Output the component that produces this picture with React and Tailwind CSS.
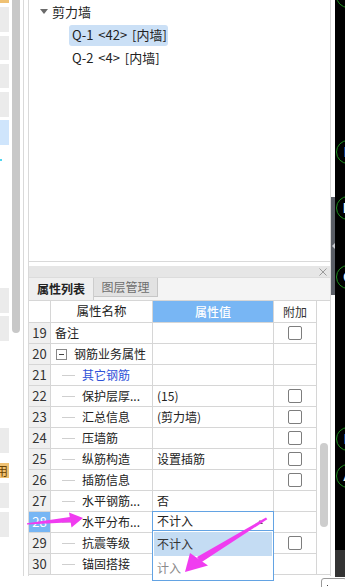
import React from "react";

const rows = [
  { n: 19, name: "备注", cb: true, kind: "plain" },
  { n: 20, name: "钢筋业务属性", kind: "group" },
  { n: 21, name: "其它钢筋", kind: "tree", blue: true },
  { n: 22, name: "保护层厚...", val: "(15)", cb: true, kind: "tree" },
  { n: 23, name: "汇总信息", val: "(剪力墙)", cb: true, kind: "tree" },
  { n: 24, name: "压墙筋", cb: true, kind: "tree" },
  { n: 25, name: "纵筋构造", val: "设置插筋", cb: true, kind: "tree" },
  { n: 26, name: "插筋信息", cb: true, kind: "tree" },
  { n: 27, name: "水平钢筋...", val: "否", kind: "tree" },
  { n: 28, name: "水平分布...", kind: "tree", dropdown: true, sel: true },
  { n: 29, name: "抗震等级", cb: true, kind: "tree" },
  { n: 30, name: "锚固搭接", kind: "tree" },
];

function Checkbox() {
  return <div className="w-[14px] h-[14px] border border-[#7d7d7d] rounded-[2px] bg-white" />;
}

function LeftStrip() {
  return (
    <div className="w-[24px] h-[576px] border-r border-[#d9d9d9] flex shrink-0">
      <div className="w-[9px] flex flex-col">
        <div className="h-[3px] bg-[#efc173]" />
        <div className="mt-[4px] h-[25px] bg-[#ebebeb]" />
        <div className="mt-[4px] h-[24px] bg-[#ebebeb]" />
        <div className="mt-[4px] h-[24px] bg-[#ebebeb]" />
        <div className="mt-[4px] h-[25px] bg-[#ebebeb]" />
        <div className="mt-[3px] h-[25px] bg-[#cfe5fc]" />
        <div className="mt-[14px] h-[2px] w-[2px] bg-[#4fd6f0]" />
        <div className="mt-[127px] h-[25px] bg-[#ebebeb]" />
        <div className="mt-[3px] h-[25px] bg-[#ebebeb]" />
        <div className="mt-[87px] h-[25px] bg-[#ebebeb]" />
        <div className="mt-[10px] h-[15px] bg-[#efc173] overflow-hidden flex items-center">
          <span className="ml-[-4px] text-[12px] leading-[15px] text-[#6b4200]">用</span>
        </div>
        <div className="mt-[5px] h-[25px] bg-[#ebebeb]" />
        <div className="mt-[4px] h-[25px] bg-[#ebebeb]" />
      </div>
      <div className="w-[3px]" />
      <div className="w-[8px] h-[333px] bg-[#c8c8c8] rounded-b-full" />
    </div>
  );
}

function TreePanel() {
  return (
    <div className="h-[262px] border-b border-[#d9d9d9] text-[13px] text-[#222]">
      <div className="h-[22px] mt-[1px] flex items-center">
        <svg width="8" height="6" viewBox="0 0 8 6" className="ml-[11px]">
          <polygon points="0,0 8,0 4,5" fill="#6a6a6a" />
        </svg>
        <span className="ml-[4px] leading-[22px]">剪力墙</span>
      </div>
      <div className="h-[22px] mt-[1px] flex items-center">
        <div className="ml-[40px] w-[99px] h-[21px] rounded-[3px] bg-[#cbe0f6] flex items-center pl-[3px] whitespace-pre [word-spacing:2px]">
          Q-1 &lt;42&gt; [内墙]
        </div>
      </div>
      <div className="h-[22px] mt-[1px] flex items-center">
        <div className="ml-[43px] whitespace-pre [word-spacing:2px]">Q-2 &lt;4&gt; [内墙]</div>
      </div>
    </div>
  );
}

function Row({ r }) {
  return (
    <div className="flex h-[21px] border-b border-[#d6d6d6] text-[12px] text-[#222]">
      <div
        className={
          "w-[22px] border-r border-[#d6d6d6] flex items-center justify-center text-[13px] " +
          (r.sel ? "bg-[#77b6f4] text-white" : "bg-[#f0f0f0] text-[#333]")
        }
      >
        {r.n}
      </div>
      <div className="w-[102px] border-r border-[#d6d6d6] flex items-center overflow-hidden whitespace-nowrap">
        {r.kind === "plain" && <span className="ml-[4px]">{r.name}</span>}
        {r.kind === "group" && (
          <>
            <div className="ml-[5px] w-[11px] h-[11px] border border-[#888] bg-white flex items-center justify-center">
              <div className="w-[5px] h-px bg-[#444]" />
            </div>
            <span className="ml-[7px]">{r.name}</span>
          </>
        )}
        {r.kind === "tree" && (
          <>
            <div className="ml-[11px] w-[13px] h-px bg-[#cfcfcf]" />
            <span className={"ml-[7px] " + (r.blue ? "text-[#2f52d8]" : "")}>{r.name}</span>
          </>
        )}
      </div>
      <div className="w-[121px] border-r border-[#d6d6d6] relative flex items-center">
        {r.val && <span className="ml-[4px]">{r.val}</span>}
        {r.dropdown && (
          <>
            <div className="absolute left-[-1px] top-[-1px] w-[122px] h-[20px] border border-[#63a3e3] bg-white flex items-center">
              <span className="ml-[4px]">不计入</span>
              <svg width="6" height="4" viewBox="0 0 6 4" className="ml-auto mr-[10px] mt-[1px]">
                <polygon points="0,4 6,4 3,0" fill="#555" />
              </svg>
            </div>
            <div className="absolute left-[-1px] top-[18px] w-[122px] h-[51px] border border-[#63a3e3] bg-white z-10 flex flex-col">
              <div className="h-[24px] mt-[1px] mx-px bg-[#c4dcf3] flex items-center pl-[3px] text-[#333]">不计入</div>
              <div className="h-[24px] flex items-center pl-[4px] text-[#8a8a8a]">计入</div>
            </div>
          </>
        )}
      </div>
      <div className="w-[42px] flex items-center justify-center">{r.cb && <Checkbox />}</div>
    </div>
  );
}

function BottomPanel() {
  return (
    <div className="flex flex-col">
      <div className="h-[4px]" />
      <div className="h-[11px] bg-[#e6e6e6] flex items-center justify-end pr-[3px]">
        <svg width="8" height="8" viewBox="0 0 8 8">
          <path d="M0.5 0.5 L7.5 7.5 M7.5 0.5 L0.5 7.5" stroke="#9a9a9a" strokeWidth="1" />
        </svg>
      </div>
      <div className="h-[23px] bg-[#f4f4f4] flex border-t border-[#dcdcdc] text-[12px]">
        <div className="w-[65px] bg-[#efefef] border-r border-[#cdcdcd] flex items-center justify-center text-[#222] font-semibold">
          属性列表
        </div>
        <div className="w-[64px] h-[19px] bg-[#e2e2e2] border-r border-b border-[#c6c6c6] flex items-center justify-center text-[#6e6e6e]">
          图层管理
        </div>
      </div>
      <div className="flex border-t border-[#d6d6d6]">
        <div className="flex flex-col">
          <div className="flex h-[22px] border-b border-[#d6d6d6] text-[12px]">
            <div className="w-[22px] border-r border-[#d6d6d6] bg-white" />
            <div className="w-[102px] border-r border-[#d6d6d6] flex items-center justify-center text-[#222] text-[12.5px]">
              属性名称
            </div>
            <div className="w-[121px] border-r border-[#d6d6d6] bg-[#78b6f4] flex items-center justify-center text-white font-medium">
              属性值
            </div>
            <div className="w-[42px] flex items-center justify-center text-[#333]">附加</div>
          </div>
          {rows.map((r) => (
            <Row key={r.n} r={r} />
          ))}
        </div>
        <div className="w-[14px] border-l border-[#d6d6d6] border-b flex flex-col">
          <div className="mt-[142px] ml-[3px] w-[8px] h-[84px] rounded-full bg-[#cdcdcd]" />
        </div>
      </div>
    </div>
  );
}

function RightCol() {
  const circles = [
    { t: -16, l: "" },
    { t: 140, l: "E" },
    { t: 196, l: "D" },
    { t: 265, l: "C" },
    { t: 427, l: "E" },
    { t: 464, l: "A" },
  ];
  return (
    <div className="w-[14px] flex shrink-0">
      <div className="w-[4px] flex flex-col">
        <div className="h-[197px]" />
        <div className="h-[98px] bg-[#5a5e66] flex items-center justify-center">
          <svg width="3" height="6" viewBox="0 0 3 6">
            <polygon points="3,0 3,6 0,3" fill="#c9ccd2" />
          </svg>
        </div>
      </div>
      <div className="w-[10px] flex flex-col">
        <div className="h-[550px] bg-black relative overflow-hidden">
          {circles.map((c, i) => (
            <div
              key={i}
              className="absolute left-[1px] w-[24px] h-[24px] rounded-full border border-[#1d8f1d] flex items-center justify-center text-white text-[14px] leading-none font-['DejaVu_Sans',sans-serif]"
              style={{ top: c.t }}
            >
              {c.l}
            </div>
          ))}
        </div>
        <div className="h-[27px] bg-[#333333]" />
      </div>
    </div>
  );
}

function Arrows() {
  return (
    <svg className="absolute left-0 top-0 z-20 pointer-events-none" width="345" height="587" viewBox="0 0 345 587">
      <g fill="#f03cf0">
        <polygon points="27,523.3 70,517 71.5,522.3 27,524.4" />
        <polygon points="69,512.5 83,518 71.5,527.5" />
        <polygon points="266,517.5 267.3,519.2 201,562.5 197,557" />
        <polygon points="190,553 185,572 208,565.5" />
      </g>
    </svg>
  );
}

export default function App() {
  return (
    <div className="relative w-[345px] h-[587px] overflow-hidden bg-white flex font-['Noto_Sans_CJK_SC',sans-serif] text-[#222]">
      <LeftStrip />
      <div className="w-[4px] shrink-0" />
      <div className="w-[303px] h-[576px] shrink-0 flex flex-col border-l border-r border-[#d9d9d9]">
        <TreePanel />
        <BottomPanel />
      </div>
      <RightCol />
      <div className="absolute left-[321px] top-[578px] w-[26px] h-[14px] border border-[#9a9a9a] rounded-[3px] bg-white">
        <div className="absolute left-[5px] top-[6px] w-px h-px bg-[#444]" />
      </div>
      <Arrows />
    </div>
  );
}
